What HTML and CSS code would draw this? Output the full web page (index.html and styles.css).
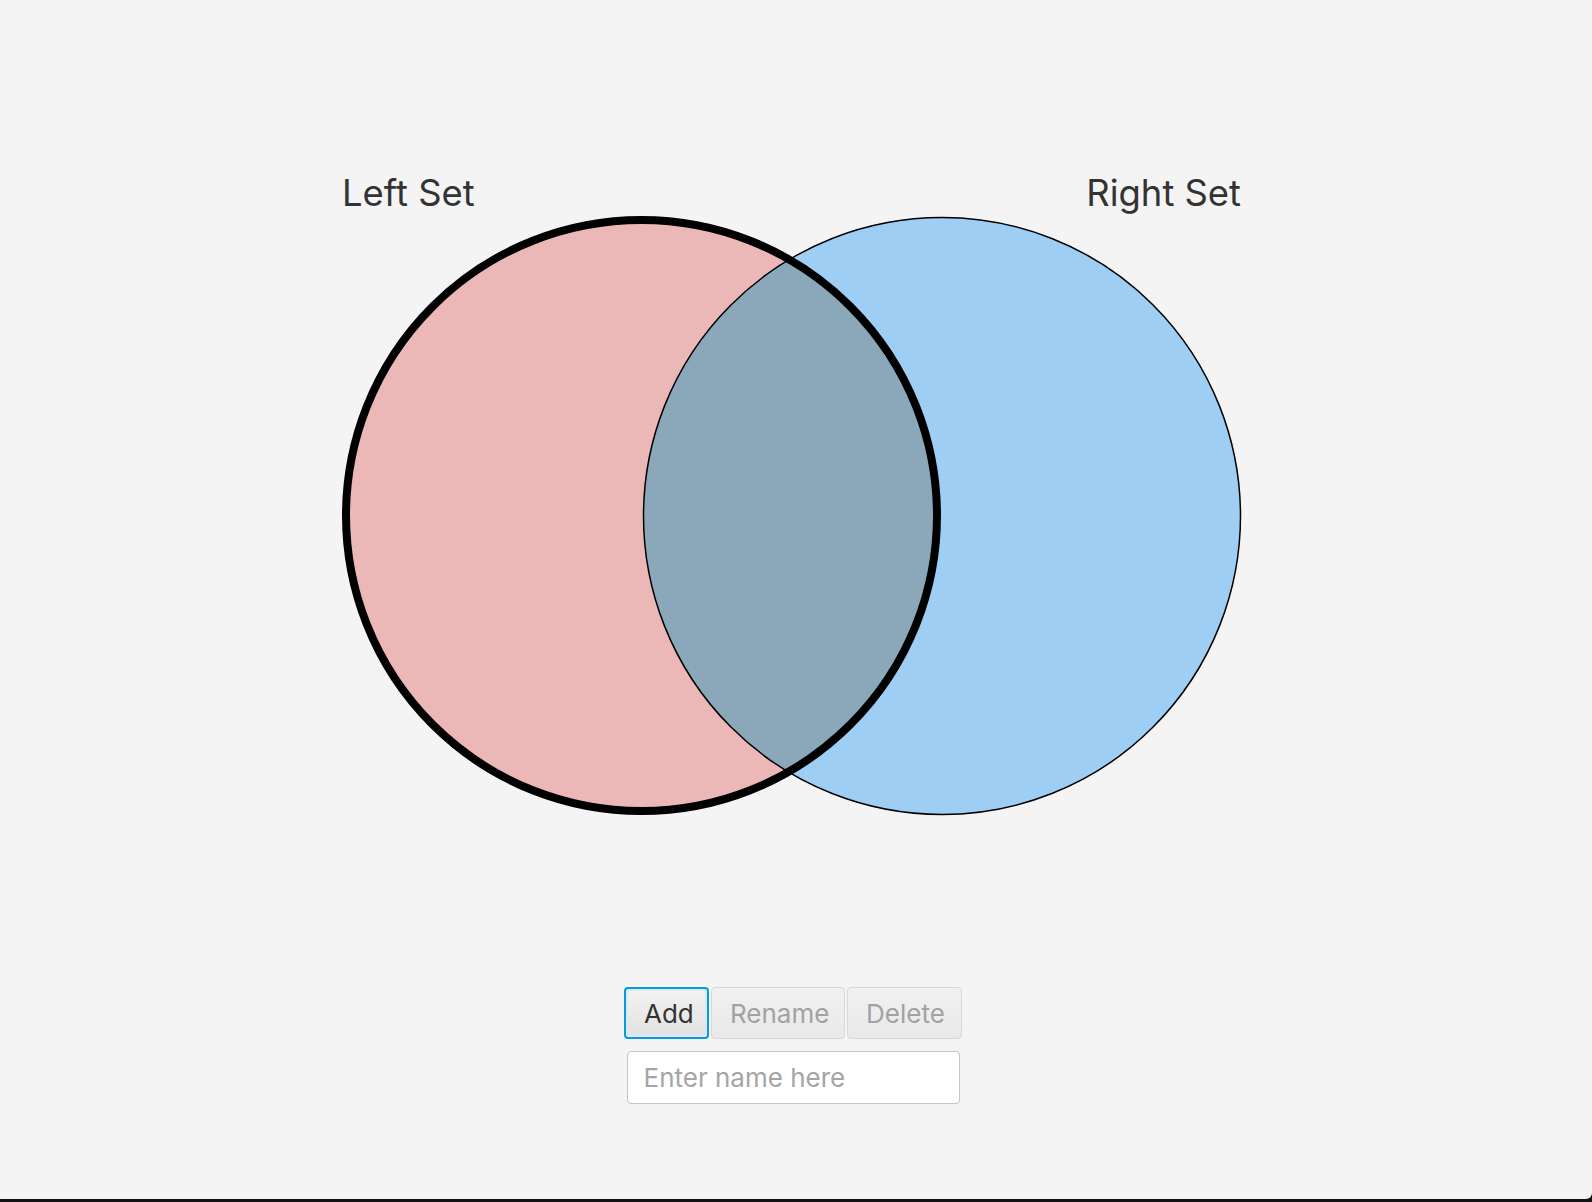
FILE: index.html
```html
<!DOCTYPE html>
<html lang="en">
<head>
<meta charset="utf-8">
<title>Venn Diagram</title>
<link rel="stylesheet" href="styles.css">
</head>
<body>
<div class="window">
  <svg class="stage" width="1592" height="850" viewBox="0 0 1592 850" xmlns="http://www.w3.org/2000/svg">
    <defs>
      <clipPath id="leftClip">
        <circle cx="641.5" cy="515.5" r="295.5"/>
      </clipPath>
    </defs>
    <text class="set-label" x="342" y="206">Left Set</text>
    <text class="set-label" x="1241" y="206" text-anchor="end">Right Set</text>
    <circle cx="641.5" cy="515.5" r="295.5" fill="#ebb7b7"/>
    <circle cx="942" cy="516" r="298.5" fill="#9ecef3"/>
    <circle cx="942" cy="516" r="298.5" fill="#8aa8ba" clip-path="url(#leftClip)"/>
    <circle cx="942" cy="516" r="298.5" fill="none" stroke="#000" stroke-width="1.5"/>
    <circle cx="641.5" cy="515.5" r="295.5" fill="none" stroke="#000" stroke-width="8"/>
  </svg>
  <div class="controls">
    <div class="button-row">
      <button class="btn btn-focused" type="button">Add</button>
      <button class="btn btn-disabled" type="button" disabled>Rename</button>
      <button class="btn btn-disabled" type="button" disabled>Delete</button>
    </div>
    <input class="name-field" type="text" placeholder="Enter name here">
  </div>
</div>
</body>
</html>
```
FILE: styles.css
```css
html {
  background: #111;
}
body {
  margin: 0;
  font-family: Inter, "Noto Sans", "Liberation Sans", sans-serif;
}
.window {
  height: 1199px;
  background: #f4f4f4;
  border-bottom-right-radius: 6px;
  display: flex;
  flex-direction: column;
  align-items: center;
  overflow: hidden;
}
.stage {
  display: block;
  flex: none;
}
.set-label {
  font-family: Inter, "Noto Sans", "Liberation Sans", sans-serif;
  font-size: 36.4px;
  fill: #333;
}
.controls {
  margin-top: 137px;
  padding-right: 6px;
  display: flex;
  flex-direction: column;
  align-items: center;
  gap: 12px;
}
.button-row {
  display: flex;
  gap: 2px;
}
.btn {
  height: 52px;
  box-sizing: border-box;
  padding: 0 18px;
  font-family: Inter, "Noto Sans", "Liberation Sans", sans-serif;
  font-size: 26px;
  color: #333;
  background: linear-gradient(#f3f3f3, #e1e1e1);
  border: 1px solid #c2c2c2;
  border-radius: 4px;
}
.btn-focused {
  width: 85px;
  border: 2px solid #0a9ad6;
  box-shadow: inset 0 0 0 2px #dbeaf2;
}
.btn-disabled {
  color: #a2a2a2;
  background: linear-gradient(#f1f1f1, #e9e9e9);
  border-color: #d8d8d8;
}
.btn-disabled:nth-child(2) {
  width: 134px;
}
.btn-disabled:nth-child(3) {
  width: 115px;
}
.name-field {
  width: 333px;
  height: 53px;
  box-sizing: border-box;
  padding: 0 16px;
  font-family: Inter, "Noto Sans", "Liberation Sans", sans-serif;
  font-size: 26px;
  color: #333;
  background: #fff;
  border: 1.5px solid #c4c4c4;
  border-radius: 4px;
  outline: none;
}
.name-field::placeholder {
  color: #a5a5a5;
}
```
